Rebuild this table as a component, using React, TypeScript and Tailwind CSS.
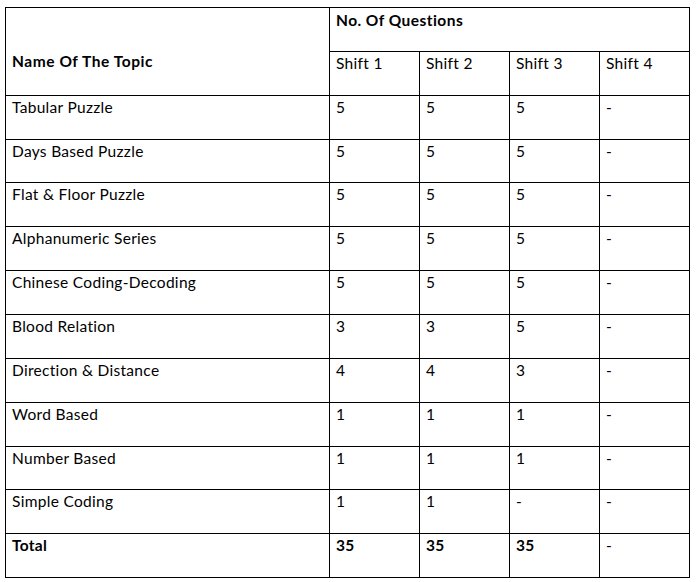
import React from "react";

const rows: [string, string, string, string, string][] = [
  ["Tabular Puzzle", "5", "5", "5", "-"],
  ["Days Based Puzzle", "5", "5", "5", "-"],
  ["Flat & Floor Puzzle", "5", "5", "5", "-"],
  ["Alphanumeric Series", "5", "5", "5", "-"],
  ["Chinese Coding-Decoding", "5", "5", "5", "-"],
  ["Blood Relation", "3", "3", "5", "-"],
  ["Direction & Distance", "4", "4", "3", "-"],
  ["Word Based", "1", "1", "1", "-"],
  ["Number Based", "1", "1", "1", "-"],
  ["Simple Coding", "1", "1", "-", "-"],
];

export default function App() {
  return (
    <div
      className="min-h-[582px] w-[697px] bg-white pl-[5px] pt-[7px] text-black"
      style={{ fontFamily: "Lato, 'Noto Sans', sans-serif" }}
    >
      <div className="w-fit bg-black p-px">
        <div className="grid grid-cols-[323px_89px_89px_89px_89px] grid-rows-[43px_43px_43px_42px_43px_43px_43px_43px_43px_43px_42px_43px_43px] gap-px text-[15.5px] leading-[18px] tracking-[0.3px]">
          <div className="row-span-2 bg-white pl-[6px] pt-[44px] font-bold tracking-[0.55px]">
            Name Of The Topic
          </div>
          <div className="col-span-4 bg-white pl-[6px] pt-[3px] font-bold tracking-[0.45px]">
            No. Of Questions
          </div>
          {["Shift 1", "Shift 2", "Shift 3", "Shift 4"].map((s) => (
            <div key={s} className="bg-white pl-[6px] pt-[2px]">
              {s}
            </div>
          ))}
          {rows.map((r) =>
            r.map((c, i) => (
              <div key={r[0] + i} className="bg-white pl-[6px] pt-[2px]">
                {c}
              </div>
            ))
          )}
          {["Total", "35", "35", "35", "-"].map((c, i) => (
            <div
              key={"t" + i}
              className={`bg-white pl-[6px] pt-[2px] ${i < 4 ? "font-bold" : ""}`}
            >
              {c}
            </div>
          ))}
        </div>
      </div>
    </div>
  );
}
